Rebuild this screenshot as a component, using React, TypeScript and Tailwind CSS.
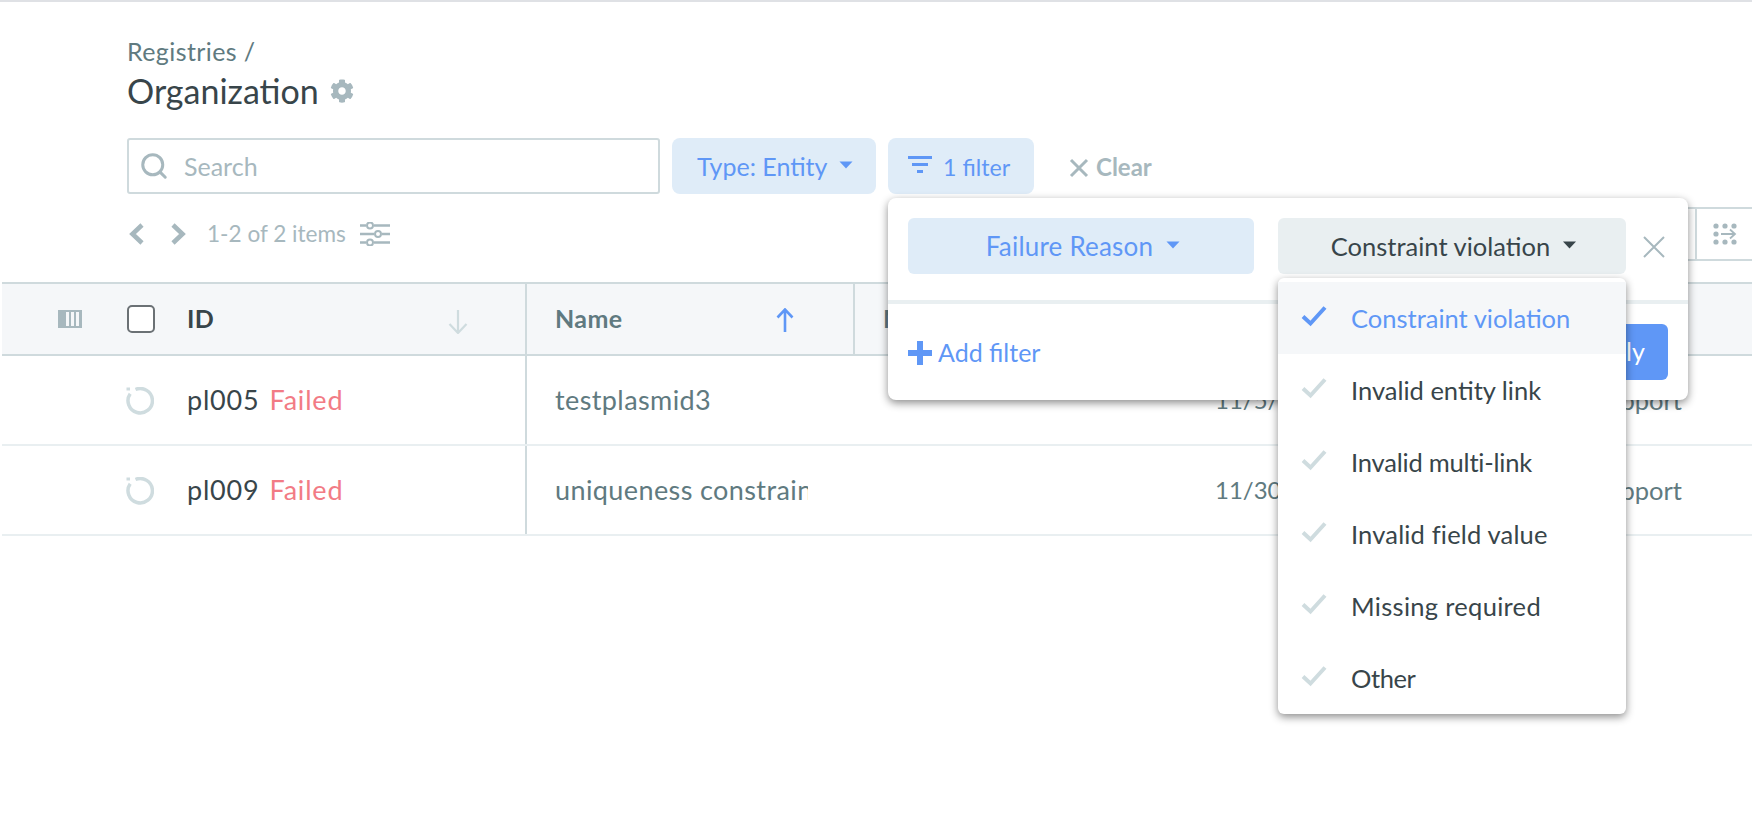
import React from "react";
import { Search } from "lucide-react";
import { FaCog } from "react-icons/fa";

const Caret = ({ className }: { className: string }) => (
  <svg viewBox="0 0 14 8" className={className} fill="currentColor">
    <path d="M0.5 0.5h13L7 7.5z" />
  </svg>
);

const Check = ({ className }: { className: string }) => (
  <svg viewBox="0 0 26 22" className={className} fill="none" stroke="currentColor" strokeWidth="4">
    <path d="M2 11.5l7.5 7L24 2.5" />
  </svg>
);

const Ring = () => (
  <svg viewBox="0 0 28 28" className="w-[28px] h-[28px] mt-[2px] text-[#cfdcdf]" fill="none" stroke="currentColor" strokeWidth="3.5">
    <path d="M9.5 2.5A12.2 12.2 0 1 1 4.2 6.8" />
    <rect x="0.5" y="0.5" width="3.5" height="3" fill="currentColor" stroke="none" />
  </svg>
);

const Row = ({ id, name, date }: { id: string; name: string; date: string }) => (
  <div className="flex h-[90px] border-b-2 border-[#e9eff1] text-[#607a80]">
    <div className="w-[525px] shrink-0 flex items-center pl-[124px] border-r-2 border-[#cfdadd] text-[27px] tracking-[0.8px]">
      <Ring />
      <span className="ml-[33px] text-[#38454a]">{id}</span>
      <span className="ml-[10px] text-[#f27b85]">Failed</span>
    </div>
    <div className="w-[281px] shrink-0 pl-[28px] flex items-center overflow-hidden whitespace-nowrap text-[27px] tracking-[0.4px]">{name}</div>
    <div className="flex-1 min-w-0 pl-[407px] flex items-center whitespace-nowrap text-[24px]">{date}</div>
    <div className="pr-[70px] flex items-center whitespace-nowrap text-[25.5px]">Benchling Support</div>
  </div>
);

const items = [
  { t: "Constraint violation", c: "tracking-[0px]" },
  { t: "Invalid entity link", c: "tracking-[0px]" },
  { t: "Invalid multi-link", c: "tracking-[-0.2px]" },
  { t: "Invalid field value", c: "tracking-[0.17px]" },
  { t: "Missing required", c: "tracking-[0.3px]" },
  { t: "Other", c: "tracking-[-0.4px]" },
];

export default function App() {
  return (
    <div className="relative w-full h-[822px] overflow-hidden bg-white border-t-2 border-[#dfe1e5]" style={{ fontFamily: "Lato, 'Noto Sans', sans-serif" }}>
      <div className="pl-[127px] pt-[33px]">
        <div className="text-[25px] tracking-[0.4px] leading-[32px] text-[#607a80]">Registries /</div>
        <div className="mt-[4px] flex items-center gap-[11px] h-[40px]">
          <span className="text-[34px] leading-[40px] text-[#38454a]">Organization</span>
          <FaCog className="w-[24px] h-[24px] text-[#a7b8be]" />
        </div>
        <div className="mt-[27px] flex items-center h-[56px]">
          <div className="w-[533px] h-[56px] rounded-[3px] border-2 border-[#cfdadd] flex items-center pl-[10px]">
            <Search className="w-[30px] h-[30px] text-[#a7b8be]" strokeWidth={2.4} />
            <span className="ml-[15px] pt-[2px] text-[25px] text-[#a7b8be]">Search</span>
          </div>
          <div className="ml-[12px] w-[204px] h-[56px] rounded-[8px] bg-[#dfecf8] flex items-center pl-[25px] pt-[2px] text-[25px] text-[#5f97f6]">
            Type: Entity
            <Caret className="w-[14px] h-[8px] ml-[12px] mb-[5px]" />
          </div>
          <div className="ml-[12px] w-[146px] h-[56px] rounded-[8px] bg-[#dfecf8] flex items-center pl-[20px] pt-[2px] text-[23.2px] text-[#5f97f6]">
            <svg viewBox="0 0 24 20" className="w-[24px] h-[20px] mr-[11px] mb-[5px]" fill="currentColor">
              <rect x="0" y="1" width="24" height="3" />
              <rect x="4" y="8" width="16" height="3" />
              <rect x="9" y="15" width="6" height="3" />
            </svg>
            1 filter
          </div>
          <div className="ml-[35px] pt-[2px] flex items-center text-[24px] text-[#a7b8be]">
            <svg viewBox="0 0 20 20" className="w-[20px] h-[20px] mt-[2px]" fill="none" stroke="currentColor" strokeWidth="3">
              <path d="M2 2l16 16M18 2L2 18" />
            </svg>
            <span className="ml-[7px] font-bold">Clear</span>
          </div>
        </div>
        <div className="mt-[15px] flex items-center h-[50px] text-[#a7b8be]">
          <svg viewBox="0 0 16 22" className="w-[16px] h-[22px] ml-[1px]" fill="none" stroke="currentColor" strokeWidth="4.6">
            <path d="M14 2L4.5 11 14 20" />
          </svg>
          <svg viewBox="0 0 16 22" className="w-[16px] h-[22px] ml-[27px]" fill="none" stroke="currentColor" strokeWidth="4.6">
            <path d="M2 2l9.5 9L2 20" />
          </svg>
          <span className="ml-[20px] text-[22.6px]">1-2 of 2 items</span>
          <svg viewBox="0 0 30 24" className="w-[30px] h-[24px] ml-[14px]" fill="none" stroke="currentColor" strokeWidth="2.5">
            <path d="M0 3.5h6M14 3.5h16M0 12h14M22 12h8M0 20.5h6M14 20.5h16" />
            <circle cx="10" cy="3.5" r="3" strokeWidth="2" />
            <circle cx="18" cy="12" r="3" strokeWidth="2" />
            <circle cx="10" cy="20.5" r="3" strokeWidth="2" />
          </svg>
        </div>
      </div>

      <div className="ml-[2px] mt-[23px]">
        <div className="flex h-[74px] bg-[#f5f7f9] border-y-2 border-[#cfdadd] text-[25px] tracking-[0.4px] font-bold text-[#607a80]">
          <div className="w-[525px] shrink-0 flex items-center border-r-2 border-[#cfdadd]">
            <svg viewBox="0 0 24 18" className="ml-[56px] w-[24px] h-[18px]">
              <rect width="24" height="18" fill="#a7b8be" />
              <rect x="8" y="2" width="3" height="14" fill="#f5f7f9" />
              <rect x="13" y="2" width="3" height="14" fill="#f5f7f9" />
              <rect x="18" y="2" width="3" height="14" fill="#f5f7f9" />
            </svg>
            <div className="ml-[45px] w-[28px] h-[28px] rounded-[5px] border-2 border-[#6b7175] bg-white" />
            <span className="ml-[32px] text-[#38454a]">ID</span>
            <svg viewBox="0 0 20 24" className="ml-[234px] mt-[6px] w-[20px] h-[24px] text-[#cfdcdf]" fill="none" stroke="currentColor" strokeWidth="2.2">
              <path d="M10 0v23M1.5 14l8.5 9 8.5-9" />
            </svg>
          </div>
          <div className="w-[328px] shrink-0 flex items-center pl-[28px] border-r-2 border-[#cfdadd]">
            Name
            <svg viewBox="0 0 18 24" className="ml-[153px] mt-[2px] w-[18px] h-[24px] text-[#5f97f6]" fill="none" stroke="currentColor" strokeWidth="2.6">
              <path d="M9 24V1.5M1.5 9.5L9 1.5l7.5 8" />
            </svg>
          </div>
          <div className="pl-[28px] flex items-center">Modified</div>
        </div>
        <Row id="pl005" name="testplasmid3" date="11/5/2020" />
        <Row id="pl009" name="uniqueness constraint" date="11/30/2020" />
      </div>

      <div className="absolute left-[1640px] top-[205px] w-[112px] h-[54px] flex">
        <div className="w-[55px] h-[54px] border-y-2 border-[#cfdadd]" />
        <div className="w-[57px] h-[54px] border-2 border-r-0 border-[#cfdadd] flex items-center justify-center">
          <svg viewBox="0 0 24 22" className="w-[24px] h-[22px] text-[#a7b8be]" fill="currentColor">
            <circle cx="3" cy="3" r="2.6" /><circle cx="12" cy="3" r="2.6" /><circle cx="21" cy="3" r="2.6" />
            <circle cx="3" cy="11" r="2.6" />
            <circle cx="3" cy="19" r="2.6" /><circle cx="12" cy="19" r="2.6" /><circle cx="21" cy="19" r="2.6" />
            <path d="M8 11h14M17 6.5l5 4.5-5 4.5" fill="none" stroke="currentColor" strokeWidth="1.8" />
          </svg>
        </div>
      </div>

      <div className="absolute left-[888px] top-[196px] w-[800px] h-[202px] rounded-[8px] bg-white shadow-[0_3px_8px_rgba(0,0,0,0.45)]">
        <div className="h-[106px] border-b-4 border-[#e9eff1] pt-[20px] pl-[20px] flex items-start">
          <div className="w-[346px] h-[56px] rounded-[6px] bg-[#dfecf8] flex items-center justify-center pl-[4px] text-[26px] tracking-[0.2px] text-[#5f97f6]">
            Failure Reason
            <Caret className="w-[14px] h-[8px] ml-[13px] mb-[3px]" />
          </div>
          <div className="ml-[24px] w-[348px] h-[56px] rounded-[6px] bg-[#e9eff1] flex items-center justify-center pl-[4px] text-[25.5px] text-[#38454a]">
            Constraint violation
            <Caret className="w-[15px] h-[8px] ml-[12px] mb-[3px]" />
          </div>
          <svg viewBox="0 0 22 22" className="ml-[17px] mt-[18px] w-[22px] h-[22px] text-[#a7b8be]" fill="none" stroke="currentColor" strokeWidth="2">
            <path d="M1 1l20 20M21 1L1 21" />
          </svg>
        </div>
        <div className="flex items-center h-[92px] pt-[5px] pl-[20px] pr-[20px] justify-between">
          <div className="flex items-center text-[25px] text-[#5f97f6]">
            <svg viewBox="0 0 24 24" className="w-[24px] h-[24px] mr-[6px]" fill="currentColor">
              <path d="M9 0h6v9h9v6h-9v9H9v-9H0V9h9z" />
            </svg>
            Add filter
          </div>
          <div className="h-[56px] w-[110px] mb-[2px] rounded-[6px] bg-[#5f97f6] flex items-center justify-center text-[25px] text-white">Apply</div>
        </div>
      </div>

      <div className="absolute left-[1278px] top-[276px] w-[348px] h-[436px] rounded-[6px] bg-white shadow-[0_3px_8px_rgba(0,0,0,0.45)] pt-[4px]">
        {items.map(({ t, c }, i) => (
          <div key={t} className={"h-[72px] flex items-center pl-[23px] text-[25.5px] " + (i === 0 ? "bg-[#f5f7f9] text-[#5f97f6]" : "text-[#38454a]")}>
            <Check className={"w-[26px] h-[22px] mb-[4px] " + (i === 0 ? "text-[#5f97f6]" : "text-[#cfdcdf]")} />
            <span className={"ml-[24px] " + c}>{t}</span>
          </div>
        ))}
      </div>
    </div>
  );
}
